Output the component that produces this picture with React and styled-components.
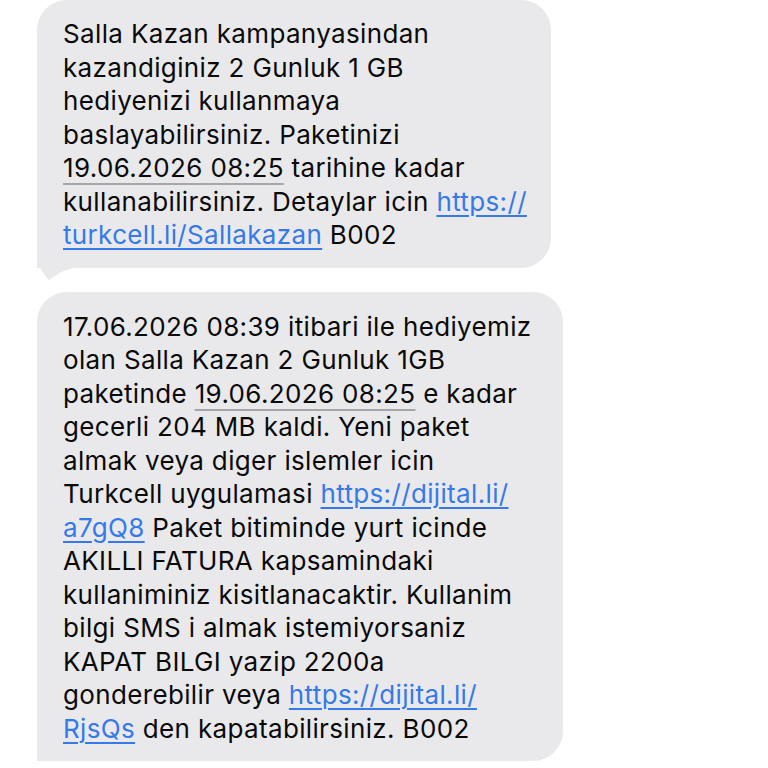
import React from 'react';
import styled, { createGlobalStyle } from 'styled-components';

const GlobalStyle = createGlobalStyle`
  html, body {
    margin: 0;
    padding: 0;
    background: #fff;
  }
`;

const Thread = styled.div`
  display: flex;
  flex-direction: column;
  align-items: flex-start;
  gap: 24px;
  padding-left: 37px;
  font-family: Inter, "Liberation Sans", sans-serif;
  font-size: 26px;
  line-height: 33.5px;
  letter-spacing: 0.35px;
  color: #0a0a0a;
`;

const Bubble = styled.div`
  position: relative;
  box-sizing: border-box;
  width: ${p => p.$width}px;
  padding: ${p => p.$top}px 20px 16px 26px;
  background: #e9e9eb;
  border-radius: 30px 30px 30px 0;
`;

const Tail = styled.svg`
  position: absolute;
  left: 0;
  bottom: -12px;
  width: 40px;
  height: 28px;
`;

const Line = styled.div`
  white-space: nowrap;
`;

const Link = styled.span`
  color: #357ae8;
  text-decoration: underline;
  text-decoration-thickness: 1.5px;
  text-underline-offset: 4px;
`;

const Detected = styled.span`
  text-decoration: underline;
  text-decoration-color: #a6a6a8;
  text-decoration-thickness: 1.5px;
  text-underline-offset: 6px;
`;

const BubbleTail = () => (
  <Tail viewBox="0 0 40 28">
    <path d="M0,0 L36,0 L36,16 C27,18 19,22 12,28 C5,21 0,12 0,0 Z" fill="#e9e9eb" />
  </Tail>
);

const Message = ({ width, top, lines }) => (
  <Bubble $width={width} $top={top}>
    {lines.map((l, i) => <Line key={i}>{l}</Line>)}
    <BubbleTail />
  </Bubble>
);

const first = [
  'Salla Kazan kampanyasindan',
  'kazandiginiz 2 Gunluk 1 GB',
  'hediyenizi kullanmaya',
  'baslayabilirsiniz. Paketinizi',
  <><Detected>19.06.2026 08:25</Detected> tarihine kadar</>,
  <>kullanabilirsiniz. Detaylar icin <Link>https://</Link></>,
  <><Link>turkcell.li/Sallakazan</Link> B002</>,
];

const second = [
  '17.06.2026 08:39 itibari ile hediyemiz',
  'olan Salla Kazan 2 Gunluk 1GB',
  <>paketinde <Detected>19.06.2026 08:25</Detected> e kadar</>,
  'gecerli 204 MB kaldi. Yeni paket',
  'almak veya diger islemler icin',
  <>Turkcell uygulamasi <Link>https://dijital.li/</Link></>,
  <><Link>a7gQ8</Link> Paket bitiminde yurt icinde</>,
  'AKILLI FATURA kapsamindaki',
  'kullaniminiz kisitlanacaktir. Kullanim',
  'bilgi SMS i almak istemiyorsaniz',
  'KAPAT BILGI yazip 2200a',
  <>gonderebilir veya <Link>https://dijital.li/</Link></>,
  <><Link>RjsQs</Link> den kapatabilirsiniz. B002</>,
];

export default function App() {
  return (
    <>
      <GlobalStyle />
      <Thread>
        <Message width={514} top={17} lines={first} />
        <Message width={526} top={18} lines={second} />
      </Thread>
    </>
  );
}
